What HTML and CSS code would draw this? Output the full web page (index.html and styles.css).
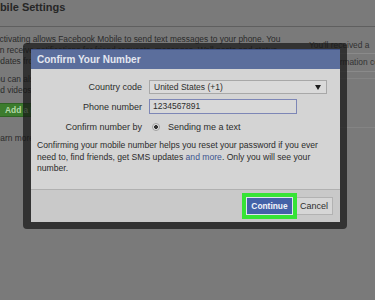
FILE: index.html
```html
<!DOCTYPE html>
<html lang="en">
<head>
    <meta charset="UTF-8">
    <meta name="viewport" content="width=device-width, initial-scale=1.0">
    <title>Mobile Settings</title>
    <link rel="stylesheet" href="styles.css">
</head>
<body>
    <div class="page">
        <h2 class="page-title">Mobile Settings</h2>
        <div class="page-body">
            <div class="main-col">
                <p class="intro">Activating allows Facebook Mobile to send text messages to your phone. You<br>can receive notifications for friend requests, messages, Wall posts and status<br>updates from your friends.</p>
                <p>You can also update your status, search for phone numbers, or upload photos<br>and videos from your phone.</p>
                <button class="add-button">Add a Phone</button>
                <p class="learn-more">Learn more about Facebook Mobile</p>
            </div>
            <div class="side-col">
                <p class="side-text">You'll received a</p>
                <div class="side-box">confirmation code</div>
                <div class="side-box side-box-tall"></div>
            </div>
        </div>
    </div>

    <div class="dialog">
        <div class="dialog-title">Confirm Your Number</div>
        <div class="dialog-body">
            <div class="form-grid">
                <span class="form-label">Country code</span>
                <div class="select">
                    <span>United States (+1)</span>
                    <span class="select-arrow"></span>
                </div>
                <span class="form-label">Phone number</span>
                <div class="text-input">1234567891</div>
                <span class="form-label">Confirm number by</span>
                <div class="radio-row"><span class="radio"></span>Sending me a text</div>
            </div>
            <p class="dialog-note">Confirming your mobile number helps you reset your password if you ever need to, find friends, get SMS updates <a href="#">and more</a>. Only you will see your number.</p>
        </div>
        <div class="dialog-footer">
            <button class="btn btn-continue">Continue</button>
            <button class="btn btn-cancel">Cancel</button>
        </div>
    </div>
</body>
</html>
```

FILE: styles.css
```css
body {
    font-family: "Liberation Sans", Arial, sans-serif;
    margin: 0;
    background-color: #7a7a7a;
    color: #2a2a2a;
    overflow: hidden;
    height: 300px;
}
.page {
    width: 440px;
}
.page-title {
    margin: 0 0 0 -16px;
    padding-top: 1px;
    height: 25px;
    font-size: 11px;
    line-height: 13px;
    font-weight: bold;
    color: #262626;
    border-bottom: 1px solid #5f5f5f;
}
.page-body {
    display: flex;
    margin-left: -9px;
}
.main-col {
    width: 318px;
    flex: none;
    padding-top: 7px;
}
.main-col p {
    margin: 0 0 7px;
    font-size: 8.4px;
    line-height: 11px;
    white-space: nowrap;
}
.main-col .intro {
    text-indent: 3px;
}
.add-button {
    display: block;
    margin: 1px 0 0;
    height: 14px;
    padding: 0 10px 0 13px;
    font-family: inherit;
    font-size: 8.4px;
    font-weight: bold;
    color: #b5d9a8;
    background-color: #3c7c2d;
    border: 1px solid #2f6424;
}
.main-col .learn-more {
    margin-top: 16px;
}
.side-col {
    flex: none;
    width: 120px;
    padding-top: 13px;
    font-size: 8.4px;
}
.side-text {
    margin: 0;
    line-height: 11px;
    color: #303030;
}
.side-box {
    margin-top: 2px;
    padding: 4px 0 4px 13px;
    line-height: 9px;
    color: #333;
    border-top: 1px solid #8a8a8a;
    border-bottom: 1px solid #8a8a8a;
}
.side-box-tall {
    height: 40px;
    margin-top: 6px;
    border-color: #848484;
}

/* dialog */
.dialog {
    position: fixed;
    left: 23px;
    top: 43px;
    width: 309px;
    border-style: solid;
    border-color: rgba(22, 22, 22, 0.72);
    border-width: 6px 7px 7px 8px;
    border-radius: 4px;
    background-clip: padding-box;
}
.dialog-title {
    height: 19px;
    line-height: 19px;
    padding-left: 6px;
    font-size: 10px;
    font-weight: bold;
    color: #e3e7f0;
    background-color: #5b6e9c;
    border-top: 1px solid #43568a;
}
.dialog-body {
    height: 120px;
    box-sizing: border-box;
    padding-top: 11px;
    background-color: #d4d4d4;
}
.form-grid {
    display: grid;
    grid-template-columns: 111px auto;
    grid-template-rows: 14px 15px 16px;
    column-gap: 7px;
    row-gap: 5px;
    align-items: center;
    font-size: 9px;
    color: #2d2d2d;
}
.form-label {
    text-align: right;
}
.select {
    width: 178px;
    height: 14px;
    box-sizing: border-box;
    display: flex;
    align-items: center;
    justify-content: space-between;
    padding: 0 5px 0 4px;
    font-size: 8.5px;
    background-color: #dadada;
    border: 1px solid #a8a8a8;
}
.select-arrow {
    width: 0;
    height: 0;
    border-left: 3px solid transparent;
    border-right: 3px solid transparent;
    border-top: 5px solid #1e1e1e;
}
.text-input {
    width: 148px;
    height: 15px;
    box-sizing: border-box;
    padding-left: 3px;
    line-height: 13px;
    font-size: 8.5px;
    background-color: #d8d8d8;
    border: 1px solid #7d86b6;
}
.radio-row {
    display: flex;
    align-items: center;
    gap: 8px;
    padding-left: 3px;
}
.radio {
    width: 8px;
    height: 8px;
    box-sizing: border-box;
    border-radius: 50%;
    background: radial-gradient(circle, #333 0 1.6px, #e2e2e2 2.2px);
    border: 1px solid #a0a0a0;
}
.dialog-note {
    margin: 5px 0 0;
    padding: 0 6px;
    font-size: 8.6px;
    line-height: 11.5px;
    color: #2b2b2b;
}
.dialog-note a {
    color: #3d5590;
    text-decoration: none;
}
.dialog-footer {
    height: 32px;
    display: flex;
    align-items: center;
    justify-content: flex-end;
    gap: 2px;
    padding-right: 7px;
    background-color: #c9c9c9;
    border-top: 1px solid #b0b0b0;
}
.btn {
    height: 18px;
    box-sizing: border-box;
    padding: 0;
    font-family: inherit;
    cursor: pointer;
}
.btn-continue {
    position: relative;
    z-index: 1;
    width: 47px;
    font-size: 8.4px;
    font-weight: bold;
    color: #f2f4fa;
    background-color: #4462a8;
    border: 1px solid #dfe4f2;
    box-shadow: 0 0 0 4px #36e436;
}
.btn-cancel {
    width: 38px;
    font-size: 9px;
    color: #2e2e2e;
    background-color: #d6d6d6;
    border: 1px solid #b2b2b2;
}
```
